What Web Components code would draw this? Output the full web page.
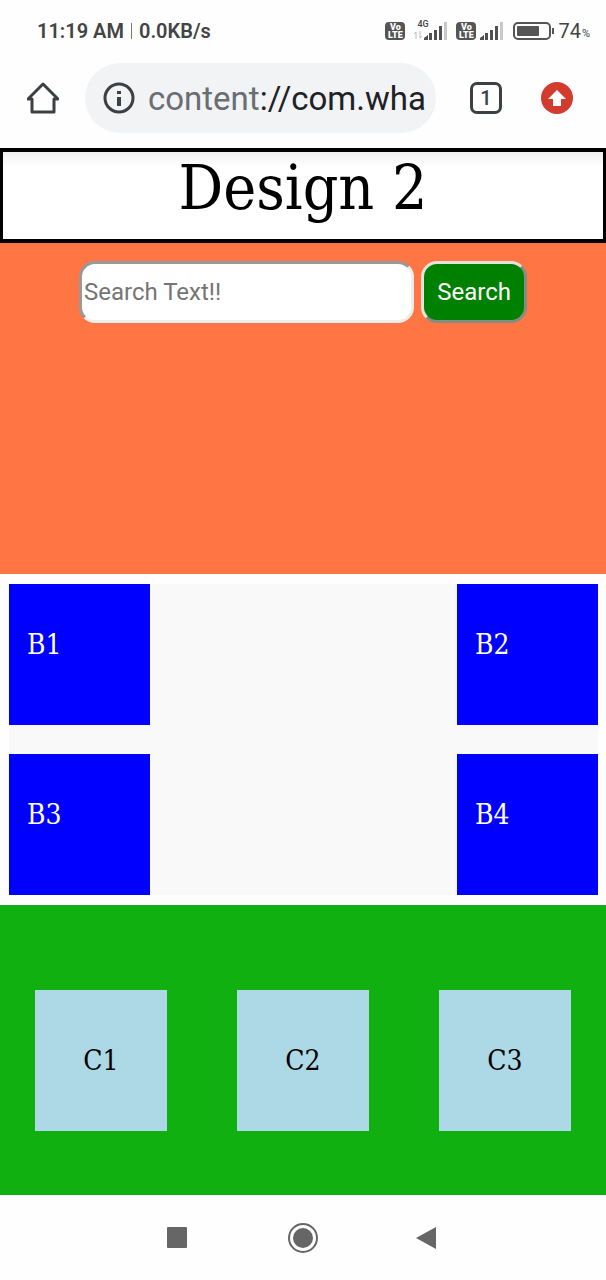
<!DOCTYPE html>
<html lang="en">
<head>
<meta charset="utf-8">
<meta name="viewport" content="width=device-width, initial-scale=1">
<title>Design 2</title>
<style>
  body {
    margin: 0;
    background: #fefefe;
    color: #000;
    font-family: "DejaVu Serif Condensed", "DejaVu Serif", serif;
    --ui: Roboto, "Liberation Sans", sans-serif;
  }
</style>
</head>
<body>
<phone-screen>
  <status-bar slot="top"></status-bar>
  <browser-bar slot="top"></browser-bar>
  <page-title>Design 2</page-title>
  <search-panel></search-panel>
  <corner-grid>
    <blue-box>B1</blue-box>
    <blue-box>B2</blue-box>
    <blue-box>B3</blue-box>
    <blue-box>B4</blue-box>
  </corner-grid>
  <card-row>
    <pale-card>C1</pale-card>
    <pale-card>C2</pale-card>
    <pale-card>C3</pale-card>
  </card-row>
  <system-nav slot="bottom"></system-nav>
</phone-screen>

<script>
const define = (name, html) => {
  const template = document.createElement('template');
  template.innerHTML = html;
  customElements.define(name, class extends HTMLElement {
    constructor() {
      super();
      this.attachShadow({ mode: 'open' }).append(template.content.cloneNode(true));
    }
  });
};

define('phone-screen', `
  <style>
    :host { display: flex; flex-direction: column; min-height: 100vh; }
    main { flex: 1; }
    header, main { display: flex; flex-direction: column; }
  </style>
  <header><slot name="top"></slot></header>
  <main><slot></slot></main>
  <slot name="bottom"></slot>`);

define('volte-badge', `
  <style>
    :host {
      display: flex; flex-direction: column; justify-content: center;
      width: 20px; height: 18px; border-radius: 4px;
      background: #555; color: #fff; text-align: center;
      font: 900 9px/8px var(--ui);
    }
  </style>
  <span>Vo</span><span>LTE</span>`);

define('signal-bars', `
  <style>:host { display: block; width: 24px; height: 18px; } svg { display: block; }</style>
  <svg width="24" height="18" viewBox="0 0 24 18" aria-hidden="true">
    <g fill="#505050">
      <path d="M0 18v-2l4-3v5z"/>
      <rect x="5" y="11" width="3" height="7"/>
      <rect x="10" y="8" width="3" height="10"/>
      <rect x="15" y="4" width="3" height="14"/>
    </g>
    <rect x="20" y="0" width="3" height="18" fill="#c8c8c8"/>
  </svg>`);

define('status-bar', `
  <style>
    :host {
      display: flex; justify-content: space-between; align-items: center;
      height: 62px; padding: 0 16px 0 37px;
      font-family: var(--ui); color: #444;
    }
    div { display: flex; align-items: center; }
    .clock { font-size: 20px; font-weight: 600; line-height: 24px; }
    .clock i { width: 1px; height: 16px; margin: 0 7px; background: #777; }
    .icons { gap: 8px; }
    .network { position: relative; padding-left: 11px; }
    .network b { position: absolute; left: 4px; top: -3px; font: 500 9px/10px var(--ui); }
    .network svg { position: absolute; left: 1px; bottom: 1px; }
    .battery { gap: 4px; font-size: 20px; line-height: 24px; }
    .battery small { font-size: 11px; padding-top: 5px; }
    .pair { gap: 4px; }
    .pct { gap: 1px; }
  </style>
  <div class="clock"><span>11:19 AM</span><i></i><span>0.0KB/s</span></div>
  <div class="icons">
    <volte-badge></volte-badge>
    <div class="network">
      <b>4G</b>
      <svg width="8" height="8" viewBox="0 0 8 8" stroke="#bbb" fill="none" aria-hidden="true"><path d="M2 8V1L0 3M6 0v7l2-2"/></svg>
      <signal-bars></signal-bars>
    </div>
    <div class="pair"><volte-badge></volte-badge><signal-bars></signal-bars></div>
    <div class="battery">
      <svg width="42" height="20" viewBox="0 0 42 20" aria-hidden="true">
        <rect x="2" y="2" width="36" height="16" rx="4" fill="none" stroke="#555" stroke-width="2"/>
        <rect x="5" y="5" width="22" height="10" rx="1" fill="#555"/>
        <rect x="40" y="7" width="2" height="6" fill="#555"/>
      </svg>
      <div class="pct"><span>74</span><small>%</small></div>
    </div>
  </div>`);

define('browser-bar', `
  <style>
    :host {
      display: flex; align-items: center; height: 72px; padding: 0 33px 14px 27px;
      font-family: var(--ui); color: #3c4043;
    }
    button { display: block; padding: 0; border: 0; background: none; color: inherit; font: inherit; }
    svg { display: block; }
    .address {
      flex: 1; min-width: 0; display: flex; align-items: center; gap: 12px;
      height: 70px; box-sizing: border-box; margin: 0 34px 0 26px; padding: 0 4px 0 18px;
      border-radius: 35px; background: #f1f3f4;
    }
    .url { overflow: hidden; white-space: nowrap; padding-top: 2px; font-size: 33px; line-height: 48px; color: #202124; }
    .url span { color: #6a6d71; }
    .tabs {
      width: 32px; height: 32px; margin-right: 39px; box-sizing: border-box;
      border: 3px solid #3c4043; border-radius: 7px; font-size: 20px; font-weight: 500; line-height: 26px;
    }
  </style>
  <button aria-label="Home">
    <svg width="32" height="32" viewBox="0 0 32 32" fill="none" stroke="#3c4043" stroke-width="3" stroke-linejoin="round"><path d="M1 17 16 2l15 15h-4v13H5V17z"/></svg>
  </button>
  <div class="address">
    <button aria-label="Site information">
      <svg width="33" height="33" viewBox="0 0 33 33"><circle cx="16" cy="16" r="14" fill="none" stroke="#3c4043" stroke-width="3"/><path d="M14 9h4v3h-4zM14 15h4v9h-4z" fill="#3c4043"/></svg>
    </button>
    <div class="url"><span>content</span>://com.wha</div>
  </div>
  <button class="tabs" aria-label="1 open tab">1</button>
  <button aria-label="Update available">
    <svg width="32" height="32" viewBox="0 0 32 32"><circle cx="16" cy="16" r="16" fill="#d23b2e"/><path d="M16 8l9 9h-5v7h-8v-7H7z" fill="#fff"/></svg>
  </button>`);

define('page-title', `
  <style>
    :host {
      display: block; border: 3px solid #000; border-width: 4px 3px;
      background: linear-gradient(#eee, #fff 14px); text-align: center;
    }
    h1 { margin: 0; padding-bottom: 15px; font-size: 62px; font-weight: 400; line-height: 72px; }
  </style>
  <h1><slot></slot></h1>`);

define('search-panel', `
  <style>
    :host { display: block; min-height: 331px; background: #ff7644; }
    form { display: flex; justify-content: center; gap: 7px; padding: 18px 79px 0; }
    input, button { height: 62px; box-sizing: border-box; margin: 0; border-radius: 16px; font: 24px/28px var(--ui); }
    input { flex: 1; min-width: 0; padding: 2px; border: 3px solid; border-color: #999 #eee #eee #999; background: #fff; color: #000; }
    input::placeholder { color: #757575; opacity: 1; }
    button { padding: 0 13px; border: 3px solid; border-color: #e6e3dc #858c85 #858c85 #e6e3dc; background: #008000; color: #fff; }
  </style>
  <form onsubmit="return false">
    <input type="search" aria-label="Search text" placeholder="Search Text!!">
    <button>Search</button>
  </form>`);

define('corner-grid', `
  <style>
    :host { display: block; padding: 10px 8px 10px 9px; }
    div { display: grid; grid-template-columns: auto auto; justify-content: space-between; row-gap: 29px; background: #f9f9f9; }
  </style>
  <div><slot></slot></div>`);

define('blue-box', `
  <style>
    :host {
      display: block; width: 141px; height: 141px; box-sizing: border-box; padding: 44px 18px;
      background: #0000ff; color: #fff; font-size: 28px; line-height: 34px;
    }
  </style>
  <slot></slot>`);

define('card-row', `
  <style>
    :host {
      display: grid; grid-template-columns: repeat(3, 1fr); flex: 1; align-items: start;
      padding: 85px 0 64px; background: #10b010;
    }
  </style>
  <slot></slot>`);

define('pale-card', `
  <style>
    :host {
      display: flex; align-items: center; justify-content: center;
      height: 141px; margin: 0 35px; background: #add8e6; font-size: 28px; line-height: 34px;
    }
  </style>
  <slot></slot>`);

define('system-nav', `
  <style>
    :host { display: flex; justify-content: center; align-items: center; gap: 93px; height: 85px; }
    button { display: block; padding: 0; border: 0; background: none; }
    svg { display: block; }
  </style>
  <button aria-label="Recent apps"><svg width="32" height="32" viewBox="0 0 32 32"><rect x="5" y="5" width="20" height="21" rx="1" fill="#666"/></svg></button>
  <button aria-label="Home screen"><svg width="32" height="32" viewBox="0 0 32 32"><circle cx="16" cy="16" r="14" fill="none" stroke="#666" stroke-width="2"/><circle cx="16" cy="16" r="10" fill="#666"/></svg></button>
  <button aria-label="Back"><svg width="32" height="32" viewBox="0 0 32 32"><path d="M4 16 24 5v22z" fill="#666"/></svg></button>`);
</script>
</body>
</html>
